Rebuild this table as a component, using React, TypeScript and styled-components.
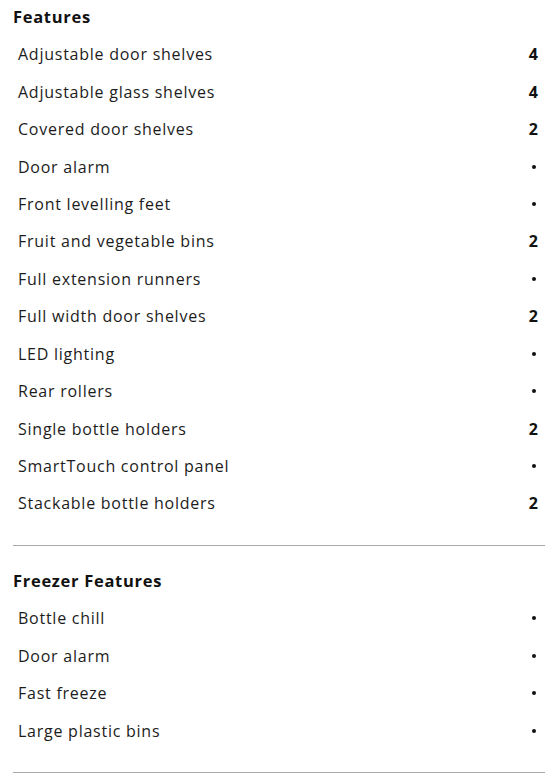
import React from "react";
import styled, { createGlobalStyle } from "styled-components";

type Feature = { label: string; value: string };

const features: Feature[] = [
  { label: "Adjustable door shelves", value: "4" },
  { label: "Adjustable glass shelves", value: "4" },
  { label: "Covered door shelves", value: "2" },
  { label: "Door alarm", value: "•" },
  { label: "Front levelling feet", value: "•" },
  { label: "Fruit and vegetable bins", value: "2" },
  { label: "Full extension runners", value: "•" },
  { label: "Full width door shelves", value: "2" },
  { label: "LED lighting", value: "•" },
  { label: "Rear rollers", value: "•" },
  { label: "Single bottle holders", value: "2" },
  { label: "SmartTouch control panel", value: "•" },
  { label: "Stackable bottle holders", value: "2" },
];

const freezerFeatures: Feature[] = [
  { label: "Bottle chill", value: "•" },
  { label: "Door alarm", value: "•" },
  { label: "Fast freeze", value: "•" },
  { label: "Large plastic bins", value: "•" },
];

const GlobalStyle = createGlobalStyle`
  body {
    margin: 0;
    background: #fff;
    font-family: "Open Sans", "Liberation Sans", sans-serif;
    color: #1c1c1c;
  }
`;

const FeatureRow = ({ label, value }: Feature) => (
  <Row>
    <Label>{label}</Label>
    {value === "•" ? <Dot aria-label="yes" /> : <Value>{value}</Value>}
  </Row>
);

const App = () => {
  return (
    <>
      <GlobalStyle />
      <Container>
        <Section>
          <Heading>Features</Heading>
          <List>
            {features.map((f) => (
              <FeatureRow key={f.label} {...f} />
            ))}
          </List>
        </Section>
        <Section>
          <Heading>Freezer Features</Heading>
          <List>
            {freezerFeatures.map((f) => (
              <FeatureRow key={f.label} {...f} />
            ))}
          </List>
        </Section>
      </Container>
    </>
  );
};

export default App;

const Container = styled.div`
  width: 532px;
  margin-left: 13px;
  display: flex;
  flex-direction: column;
`;

const Section = styled.section`
  padding: 7px 0 23px;
  border-bottom: 1.5px solid #a8a8a8;

  & + & {
    padding-top: 25px;
  }
`;

const Heading = styled.h3`
  margin: 0 0 8.5px;
  font-size: 16.5px;
  line-height: 20px;
  font-weight: 700;
  letter-spacing: 0.7px;
  color: #111;
`;

const List = styled.div`
  display: flex;
  flex-direction: column;
`;

const Row = styled.div`
  height: 37.45px;
  display: flex;
  align-items: center;
  justify-content: space-between;
  padding: 0 7px 0 5px;
`;

const Label = styled.span`
  font-size: 16px;
  letter-spacing: 0.75px;
  color: #1c1c1c;
`;

const Value = styled.span`
  font-size: 16px;
  font-weight: 700;
  color: #111;
`;

const Dot = styled.span`
  width: 4px;
  height: 4px;
  margin-right: 2px;
  border-radius: 50%;
  background: #111;
`;
